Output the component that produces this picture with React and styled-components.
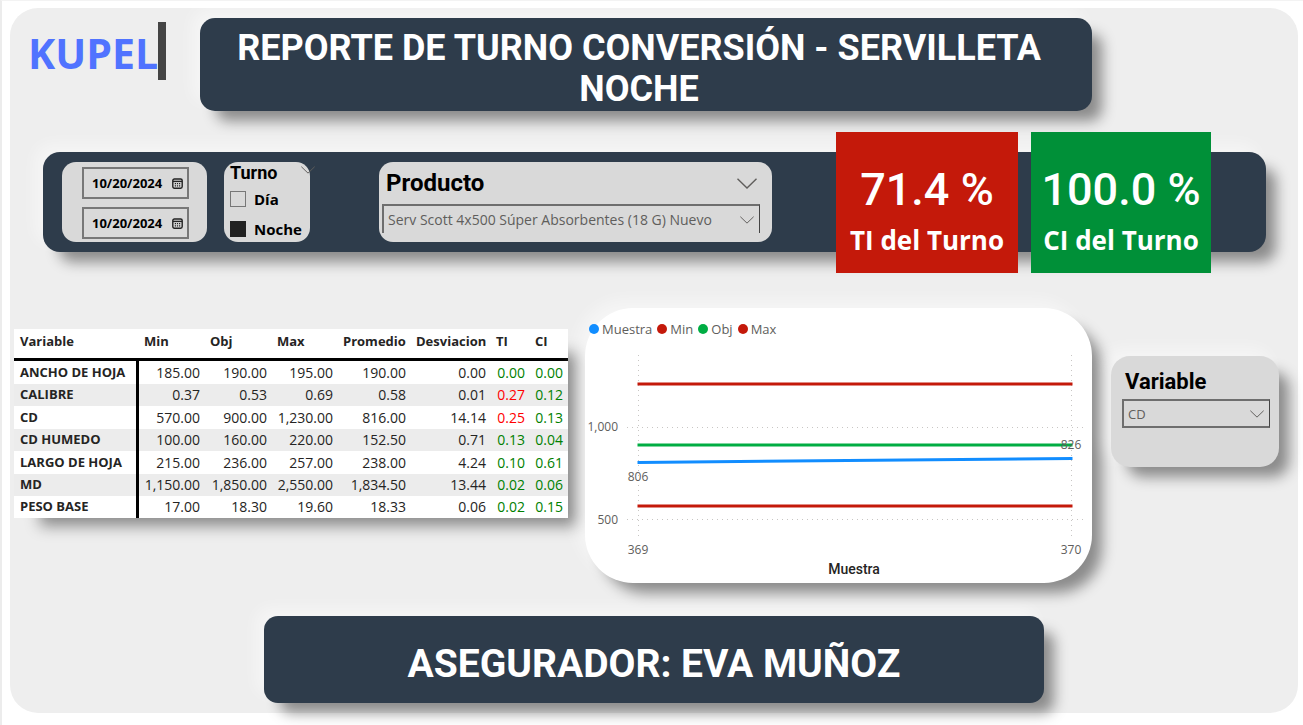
import React, { useState } from "react";
import styled, { createGlobalStyle } from "styled-components";

const display = `Roboto, "Liberation Sans", sans-serif`;
const body = `"Open Sans", "Noto Sans", sans-serif`;
const navy = "#2e3c4b";
const cardGrey = "#d9d9d9";
const raised = `13px 13px 14px -3px rgba(0, 0, 0, 0.42), -8px -8px 16px rgba(255, 255, 255, 0.45)`;

const GlobalStyle = createGlobalStyle`
  *, *::before, *::after { box-sizing: border-box; }
  body {
    margin: 0;
    background: #fff;
    border-left: 2px solid #ececec;
    border-top: 1px solid #f3f3f3;
    font-family: ${body};
    color: #252423;
  }
`;

const Canvas = styled.div`
  margin: 7px 5px 12px 8px;
  padding-bottom: 10px;
  border-radius: 28px;
  background: #eeeeee;
`;

const Header = styled.header`
  display: flex;
  align-items: flex-start;
  padding: 10px 206px 0 18px;
`;

const Logo = styled.div`
  flex: 0 0 172px;
  display: flex;
  align-items: center;
  padding-top: 4px;
  font-size: 41px;
  line-height: 62px;
  font-weight: 700;
  color: #5073ff;
`;

const LogoBar = styled.span`
  width: 8px;
  height: 58px;
  margin-bottom: 4px;
  background: #444;
`;

const Banner = styled.h1`
  flex: 1;
  margin: 0;
  padding: 10px 34px 1px 20px;
  border-radius: 15px;
  background: ${navy};
  box-shadow: ${raised};
  color: #fff;
  font-family: ${display};
  font-size: 36px;
  line-height: 41px;
  font-weight: 700;
  text-align: center;
`;

const FilterBar = styled.section`
  display: flex;
  align-items: flex-start;
  margin: 41px 32px 0 33px;
  padding: 10px 55px 9px 19px;
  border-radius: 17px;
  background: ${navy};
  box-shadow: ${raised};
`;

const FilterCard = styled.div`
  flex: ${(p) => (p.$width ? `0 0 ${p.$width}px` : "1")};
  min-width: 0;
  height: 80px;
  margin-right: ${(p) => p.$after}px;
  padding: ${(p) => p.$pad};
  border-radius: 14px;
  background: ${cardGrey};
`;

const DateList = styled.div`
  display: grid;
  grid-template-columns: minmax(0, 1fr);
  gap: 8px;
`;

const DateField = styled.label`
  display: flex;
  align-items: center;
  height: 32px;
  padding: 0 4px 0 8px;
  border: 2px solid #777;
`;

const DateInput = styled.input`
  flex: 1;
  min-width: 0;
  padding: 0;
  border: 0;
  outline: 0;
  background: none;
  font: 700 13px/20px ${body};
  color: #000;
`;

const CardHead = styled.div`
  display: flex;
  align-items: center;
  justify-content: space-between;
`;

const CardTitle = styled.h2`
  margin: 0;
  font-family: ${display};
  font-size: ${(p) => p.$size}px;
  line-height: ${(p) => p.$line}px;
  font-weight: 700;
  color: #000;
`;

const IconButton = styled.button`
  display: flex;
  padding: 0;
  border: 0;
  background: none;
  color: #605e5c;
`;

const OverhangHead = styled(CardHead)`
  align-items: flex-start;
  margin-right: -5px;
  & > button { padding-top: 4px; }
`;

const CheckLabel = styled.label`
  display: flex;
  align-items: center;
  gap: 8px;
  height: 30px;
  font-size: 15px;
  font-weight: 700;
  color: #000;
`;

const CheckBox = styled.input`
  appearance: none;
  width: 16px;
  height: 16px;
  margin: 0;
  border: 1px solid #777;
  &:checked {
    border-color: #212121;
    background: #212121;
  }
`;

const SelectBox = styled.div`
  display: flex;
  align-items: center;
  height: 29px;
  border: 2px solid #6e6e6e;
  border-right: 1px solid #444;
  border-bottom-width: ${(p) => (p.$open ? 0 : 2)}px;
  color: #605e5c;
  padding-right: 5px;
`;

const Select = styled.select`
  appearance: none;
  flex: 1;
  min-width: 0;
  padding: 0 4px;
  border: 0;
  outline: 0;
  background: none;
  font: 400 ${(p) => p.$size}px/24px ${body};
  color: #605e5c;
`;

const Kpi = styled.div`
  flex: 0 0 ${(p) => p.$width}px;
  margin: -30px ${(p) => p.$after}px -30px 0;
  height: 141px;
  padding-top: 30px;
  background: ${(p) => p.$color};
  color: #fff;
  text-align: center;
`;

const KpiValue = styled.div`
  font-family: ${display};
  font-size: 45px;
  line-height: 56px;
  font-weight: 500;
`;

const KpiLabel = styled.div`
  font-size: 26px;
  line-height: 44px;
  font-weight: 700;
`;

const Main = styled.main`
  display: flex;
  align-items: flex-start;
  margin-top: 56px;
  padding: 0 19px 0 4px;
`;

const Table = styled.table`
  flex: 0 0 auto;
  width: 554px;
  margin: 21px 17px 0 0;
  border-collapse: separate;
  border-spacing: 0;
  table-layout: fixed;
  background: #fff;
  box-shadow: 18px 16px 14px -8px rgba(0, 0, 0, 0.42);
`;

const Col = styled.col`
  width: ${(p) => p.$width}px;
`;

const HeadCell = styled.th`
  height: 32px;
  padding: 0 0 5px 5px;
  border-bottom: 3px solid #000;
  font-size: 13px;
  line-height: 18px;
  font-weight: 700;
  text-align: left;
  white-space: nowrap;
  &:first-child { padding-left: 6px; }
`;

const BodyRow = styled.tr`
  height: 23px;
  &:nth-child(even) {
    height: 22px;
    background: #ececec;
  }
  &:last-child { height: 22px; }
`;

const RowHead = styled.th`
  padding: 0 0 2px 6px;
  border-right: 3px solid #000;
  font-size: 13px;
  line-height: 20px;
  font-weight: 700;
  text-align: left;
  white-space: nowrap;
`;

const Cell = styled.td`
  padding: 0 5px 0 0;
  font-size: 14px;
  line-height: 20px;
  text-align: right;
  color: ${(p) => p.$color || "#252423"};
`;

const ChartCard = styled.section`
  flex: 1;
  min-width: 0;
  margin-right: 19px;
  padding-top: 12px;
  border-radius: 48px;
  background: #fff;
  box-shadow: ${raised};
`;

const Legend = styled.ul`
  display: flex;
  gap: 5px;
  height: 18px;
  margin: 0 0 6px;
  padding: 0 0 0 4px;
  list-style: none;
`;

const LegendItem = styled.li`
  display: flex;
  align-items: center;
  gap: 3px;
  font-size: 13px;
  line-height: 18px;
  color: #605e5c;
  &::before {
    content: "";
    width: 10px;
    height: 10px;
    border-radius: 50%;
    background: ${(p) => p.$color};
  }
`;

const Plot = styled.svg`
  display: block;
  width: 100%;
  height: auto;
`;

const AxisText = styled.text`
  font-family: ${body};
  font-size: 12px;
  fill: #605e5c;
`;

const AxisTitle = styled.text`
  font-family: ${display};
  font-size: 14px;
  font-weight: 500;
  fill: #252423;
`;

const VariableCard = styled.section`
  flex: 0 0 168px;
  height: 111px;
  margin-top: 48px;
  padding: 12px 9px 0 11px;
  border-radius: 19px;
  background: ${cardGrey};
  box-shadow: ${raised};
`;

const Indent = styled.div`
  padding: ${(p) => p.$pad};
`;

const Footer = styled.footer`
  margin: 33px 254px 0;
  padding: 22px 20px 13px;
  border-radius: 14px;
  background: ${navy};
  box-shadow: ${raised};
  color: #fff;
  font-family: ${display};
  font-size: 39px;
  line-height: 52px;
  font-weight: 700;
  text-align: center;
`;

const Chevron = ({ width, height }) => (
  <svg width={width} height={height} viewBox="0 0 20 11" fill="none" stroke="currentColor" strokeWidth="1.4" aria-hidden="true">
    <path d="M0.5 0.8 10 10 19.5 0.8" />
  </svg>
);

const CalendarIcon = () => (
  <svg width="11" height="11" viewBox="0 0 11 11" aria-hidden="true">
    <rect x="0.8" y="1" width="9.4" height="9.2" rx="1.6" fill="none" stroke="#222" strokeWidth="1.4" />
    <path d="M1 3.4h9" stroke="#222" strokeWidth="1.4" />
    <path d="M2.8 5.7h1.2M4.9 5.7h1.2M7 5.7h1.2M2.8 7.9h1.2M4.9 7.9h1.2M7 7.9h1.2" stroke="#222" strokeWidth="1.2" />
  </svg>
);

const columns = [
  ["Variable", 125],
  ["Min", 66],
  ["Obj", 67],
  ["Max", 66],
  ["Promedio", 73],
  ["Desviacion", 80],
  ["TI", 39],
  ["CI", 38],
];

const rows = [
  ["ANCHO DE HOJA", "185.00", "190.00", "195.00", "190.00", "0.00", "0.00", "0.00"],
  ["CALIBRE", "0.37", "0.53", "0.69", "0.58", "0.01", "0.27", "0.12"],
  ["CD", "570.00", "900.00", "1,230.00", "816.00", "14.14", "0.25", "0.13"],
  ["CD HUMEDO", "100.00", "160.00", "220.00", "152.50", "0.71", "0.13", "0.04"],
  ["LARGO DE HOJA", "215.00", "236.00", "257.00", "238.00", "4.24", "0.10", "0.61"],
  ["MD", "1,150.00", "1,850.00", "2,550.00", "1,834.50", "13.44", "0.02", "0.06"],
  ["PESO BASE", "17.00", "18.30", "19.60", "18.33", "0.06", "0.02", "0.15"],
];

const cellColor = (column, value) => {
  if (column === 5) return Number(value) > 0.2 ? "#ff0000" : "#008000";
  return column === 6 ? "#008000" : undefined;
};

const series = [
  ["Muestra", "#118dff"],
  ["Min", "#c4190a"],
  ["Obj", "#00ad43"],
  ["Max", "#c4190a"],
];

function Chart() {
  return (
    <ChartCard aria-label="Muestra">
      <Legend>
        {series.map(([name, color]) => (
          <LegendItem key={name} $color={color}>{name}</LegendItem>
        ))}
      </Legend>
      <Plot viewBox="0 0 507 239">
        <g stroke="#c8c6c4" strokeDasharray="1 4" fill="none">
          <path d="M42 83.5H502M42 175.5H502" />
          <path d="M53.5 11V196M486.5 11V196" />
        </g>
        <g strokeWidth="3" strokeLinecap="square" fill="none">
          <path d="M54 40H486" stroke="#c4190a" />
          <path d="M54 162H486" stroke="#c4190a" />
          <path d="M54 101H486" stroke="#00ad43" />
          <path d="M54 118.5 486 114.5" stroke="#118dff" />
        </g>
        <AxisText x="33" y="87" textAnchor="end">1,000</AxisText>
        <AxisText x="33" y="180" textAnchor="end">500</AxisText>
        <AxisText x="53" y="137" textAnchor="middle">806</AxisText>
        <AxisText x="486" y="105" textAnchor="middle">826</AxisText>
        <AxisText x="53" y="210" textAnchor="middle">369</AxisText>
        <AxisText x="486" y="210" textAnchor="middle">370</AxisText>
        <AxisTitle x="269" y="230" textAnchor="middle">Muestra</AxisTitle>
      </Plot>
    </ChartCard>
  );
}

export default function App() {
  const [start, setStart] = useState("10/20/2024");
  const [end, setEnd] = useState("10/20/2024");
  return (
    <>
      <GlobalStyle />
      <Canvas>
        <Header>
          <Logo>KUPEL<LogoBar /></Logo>
          <Banner>REPORTE DE TURNO CONVERSIÓN - SERVILLETA NOCHE</Banner>
        </Header>

        <FilterBar>
          <FilterCard $width={145} $after={17} $pad="5px 18px 0 20px">
            <DateList>
              <DateField>
                <DateInput aria-label="Fecha inicial" value={start} onChange={(e) => setStart(e.target.value)} />
                <CalendarIcon />
              </DateField>
              <DateField>
                <DateInput aria-label="Fecha final" value={end} onChange={(e) => setEnd(e.target.value)} />
                <CalendarIcon />
              </DateField>
            </DateList>
          </FilterCard>

          <FilterCard $width={86} $after={69} $pad="0 0 0 6px">
            <OverhangHead>
              <CardTitle $size={18} $line={22}>Turno</CardTitle>
              <IconButton aria-label="Opciones de turno"><Chevron width={14} height={8} /></IconButton>
            </OverhangHead>
            <CheckLabel><CheckBox type="checkbox" />Día</CheckLabel>
            <CheckLabel><CheckBox type="checkbox" defaultChecked />Noche</CheckLabel>
          </FilterCard>

          <FilterCard $after={64} $pad="6px 12px 0 3px">
            <Indent $pad="0 3px 6px 4px">
              <CardHead>
                <CardTitle $size={24} $line={30}>Producto</CardTitle>
                <IconButton aria-label="Opciones de producto"><Chevron width={20} height={11} /></IconButton>
              </CardHead>
            </Indent>
            <SelectBox $open>
              <Select $size={14} aria-label="Producto">
                <option>Serv Scott 4x500 Súper Absorbentes (18 G) Nuevo</option>
              </Select>
              <Chevron width={14} height={8} />
            </SelectBox>
          </FilterCard>

          <Kpi $width={182} $after={13} $color="#c4190a">
            <KpiValue>71.4 %</KpiValue>
            <KpiLabel>TI del Turno</KpiLabel>
          </Kpi>
          <Kpi $width={180} $after={0} $color="#009038">
            <KpiValue>100.0 %</KpiValue>
            <KpiLabel>CI del Turno</KpiLabel>
          </Kpi>
        </FilterBar>

        <Main>
          <Table>
            <colgroup>
              {columns.map(([name, width]) => <Col key={name} $width={width} />)}
            </colgroup>
            <thead>
              <tr>{columns.map(([name]) => <HeadCell key={name} scope="col">{name}</HeadCell>)}</tr>
            </thead>
            <tbody>
              {rows.map(([name, ...values]) => (
                <BodyRow key={name}>
                  <RowHead scope="row">{name}</RowHead>
                  {values.map((value, i) => (
                    <Cell key={i} $color={cellColor(i, value)}>{value}</Cell>
                  ))}
                </BodyRow>
              ))}
            </tbody>
          </Table>

          <Chart />

          <VariableCard>
            <Indent $pad="0 0 3px 3px">
              <CardTitle $size={22} $line={28}>Variable</CardTitle>
            </Indent>
            <SelectBox>
              <Select $size={13} aria-label="Variable">
                <option>CD</option>
              </Select>
              <Chevron width={14} height={8} />
            </SelectBox>
          </VariableCard>
        </Main>

        <Footer>ASEGURADOR: EVA MUÑOZ</Footer>
      </Canvas>
    </>
  );
}
